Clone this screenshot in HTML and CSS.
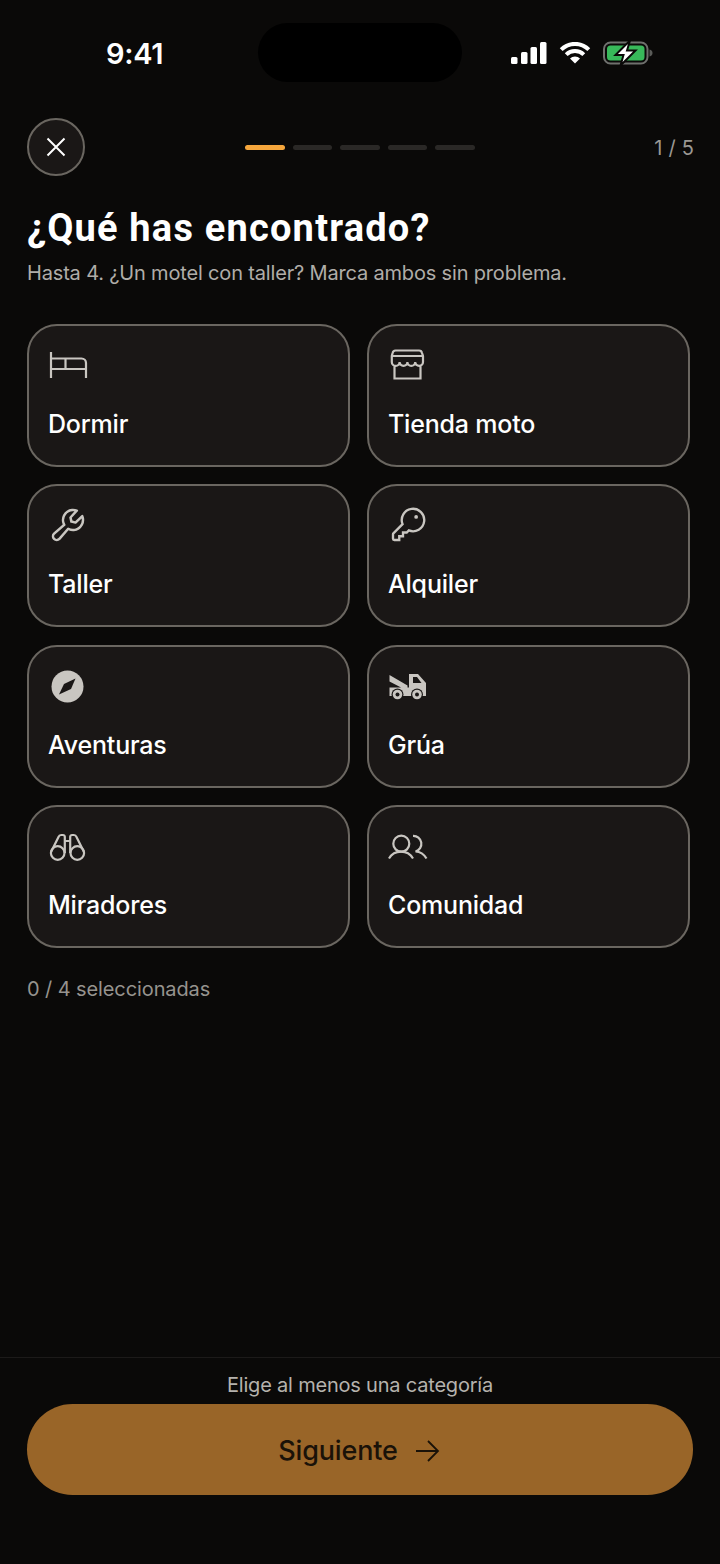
FILE: index.html
```html
<!DOCTYPE html>
<html lang="es">
<head>
    <meta charset="UTF-8">
    <meta name="viewport" content="width=device-width, initial-scale=1.0">
    <title>Nuevo lugar</title>
    <link rel="stylesheet" href="styles.css">
</head>
<body>
    <div class="page">
        <div class="status-bar">
            <div class="time">9:41</div>
            <div class="island"></div>
            <div class="status-icons">
                <svg class="signal" width="36" height="22" viewBox="0 0 36 22">
                    <rect x="0" y="15" width="6.5" height="7" rx="1.5"/>
                    <rect x="10" y="10" width="6.5" height="12" rx="1.5"/>
                    <rect x="19.5" y="5" width="6.5" height="17" rx="1.5"/>
                    <rect x="29" y="0" width="6.5" height="22" rx="1.5"/>
                </svg>
                <svg class="wifi" width="32" height="22" viewBox="0 0 32 22">
                    <path class="wifi-arc" d="M2.2 7.6A19.5 19.5 0 0 1 29.8 7.6"/>
                    <path class="wifi-arc" d="M7.2 12.6A12.5 12.5 0 0 1 24.8 12.6"/>
                    <path d="M16 21.5L11 16.5A7 7 0 0 1 21 16.5Z"/>
                </svg>
                <svg class="battery" width="50" height="26" viewBox="0 0 50 26">
                    <rect class="batt-shell" x="1" y="2.5" width="43.5" height="21" rx="6.5"/>
                    <rect class="batt-fill" x="4" y="5.5" width="37.5" height="15" rx="3.5"/>
                    <path class="batt-nub" d="M46.5 9.5c2 .3 3 1.8 3 3.5s-1 3.200-3 3.500Z"/>
                    <path class="batt-bolt" d="M27 0.500L12.500 15H20.500L17.500 25.500L32.500 10.500H24Z"/>
                </svg>
            </div>
        </div>

        <main class="content">
            <div class="top-row">
                <button class="close-btn" aria-label="Cerrar">
                    <svg width="20" height="20" viewBox="0 0 20 20"><path d="M1.500 1.500L18.500 18.500M18.500 1.500L1.500 18.500"/></svg>
                </button>
                <div class="steps">
                    <span class="step step-on"></span>
                    <span class="step"></span>
                    <span class="step"></span>
                    <span class="step"></span>
                    <span class="step"></span>
                </div>
                <div class="step-count">1 / 5</div>
            </div>

            <h1>¿Qué has encontrado?</h1>
            <p class="subtitle">Hasta 4. ¿Un motel con taller? Marca ambos sin problema.</p>

            <div class="grid">
                <div class="card">
                    <svg class="icon" viewBox="0 0 40 40">
                        <path d="M3 7V33M3 13.500H33.500a4.500 4.500 0 0 1 4.500 4.500V33M3 24H38M17.500 13.500V24"/>
                    </svg>
                    <div class="card-label">Dormir</div>
                </div>
                <div class="card">
                    <svg class="icon" viewBox="0 0 40 40">
                        <path d="M7.500 5.500H31a3 3 0 0 1 3 2.500L35 11V17a3.900 3.900 0 0 1-7.800 0a3.900 3.900 0 0 1-7.800 0a3.900 3.900 0 0 1-7.800 0a3.900 3.900 0 0 1-7.800 0V11L4.600 8a3 3 0 0 1 2.900-2.500ZM4 11H35M6.500 21V33.500H32.500V21"/>
                    </svg>
                    <div class="card-label">Tienda moto</div>
                </div>
                <div class="card">
                    <svg class="icon" viewBox="0 0 256 256">
                        <path class="solid" d="M226.760,69a8,8,0,0,0-12.840-2.880l-40.300,37.190-17.230-3.700-3.700-17.230,37.190-40.300A8,8,0,0,0,187,29.240,72,72,0,0,0,88,96,72.340,72.340,0,0,0,94,124.940L33.790,177c-.15.120-.29.260-.43.390a32,32,0,0,0,45.260,45.260c.13-.13.270-.28.390-.42L131.060,162A72,72,0,0,0,232,96,71.560,71.560,0,0,0,226.760,69ZM160,152a56.140,56.140,0,0,1-27.070-7,8,8,0,0,0-9.920,1.770L67.110,211.510a16,16,0,0,1-22.620-22.620L109.180,133a8,8,0,0,0,1.770-9.930,56,56,0,0,1,58.360-82.310l-31.200,33.810a8,8,0,0,0-1.940,7.100L141.830,108a8,8,0,0,0,6.140,6.140l26.350,5.660a8,8,0,0,0,7.100-1.940l33.810-31.200A56.060,56.060,0,0,1,160,152Z"/>
                    </svg>
                    <div class="card-label">Taller</div>
                </div>
                <div class="card">
                    <svg class="icon icon-256" viewBox="0 0 256 256">
                        <path d="M93.170,122.830a72,72,0,1,1,40,40L120,176H96v24H72v24H40a8,8,0,0,1-8-8V187.310a8,8,0,0,1,2.340-5.650Z"/>
                        <circle class="solid" cx="180" cy="76" r="12"/>
                    </svg>
                    <div class="card-label">Alquiler</div>
                </div>
                <div class="card">
                    <svg class="icon" viewBox="0 0 40 40">
                        <circle class="solid" cx="19.500" cy="20.500" r="16"/>
                        <path class="cutout" d="M27.500 12.500L23 23L11 28.500L16 18Z"/>
                    </svg>
                    <div class="card-label">Aventuras</div>
                </div>
                <div class="card">
                    <svg class="icon" viewBox="0 0 40 40">
                        <path class="solid" d="M1.500 9L19.500 19.500V22H14L1.500 15.500ZM21 8H30L38 17V30H1.500V21.500H21Z"/>
                        <path class="cutout" d="M25 11H29L33.500 17H25Z"/>
                        <circle class="cutout" cx="9.500" cy="28.500" r="6"/>
                        <circle class="cutout" cx="29" cy="28.500" r="6"/>
                        <circle class="solid" cx="9.500" cy="28.500" r="4.800"/>
                        <circle class="solid" cx="29" cy="28.500" r="4.800"/>
                        <circle class="cutout" cx="9.500" cy="28.500" r="2"/>
                        <circle class="cutout" cx="29" cy="28.500" r="2"/>
                    </svg>
                    <div class="card-label">Grúa</div>
                </div>
                <div class="card">
                    <svg class="icon" viewBox="0 0 40 40">
                        <circle cx="9.700" cy="27" r="6.800"/>
                        <circle cx="29.300" cy="27" r="6.800"/>
                        <path d="M3 26L10.500 11a3 3 0 0 1 2.700-2H15a1.800 1.800 0 0 1 1.800 1.800V27M36 26L28.500 11a3 3 0 0 0-2.700-2H24a1.800 1.800 0 0 0-1.800 1.800V27M16.800 15H22.200"/>
                    </svg>
                    <div class="card-label">Miradores</div>
                </div>
                <div class="card">
                    <svg class="icon" viewBox="0 0 40 40">
                        <circle cx="13.300" cy="17.700" r="8"/>
                        <path d="M1 32.500C3.500 28.300 8 25.700 13 25.700S22.500 28.300 25 32.500M25 9.800A8 8 0 0 1 27.500 25.500C31.500 25.700 36 28.300 38.500 32.500"/>
                    </svg>
                    <div class="card-label">Comunidad</div>
                </div>
            </div>

            <p class="counter">0 / 4 seleccionadas</p>
        </main>

        <footer class="footer">
            <p class="hint">Elige al menos una categoría</p>
            <button class="next-btn">
                <span>Siguiente</span>
                <svg width="26" height="24" viewBox="0 0 26 24"><path d="M2 12H24M14 2L24 12L14 22"/></svg>
            </button>
        </footer>
    </div>
</body>
</html>
```

FILE: styles.css
```css
body {
    margin: 0;
    background-color: #0a0908;
    font-family: Inter, "Noto Sans", sans-serif;
    color: #fff;
}
p, h1 {
    margin: 0;
}
button {
    font-family: inherit;
    cursor: pointer;
}
.page {
    height: 1564px;
    display: flex;
    flex-direction: column;
    overflow: hidden;
}

/* status bar */
.status-bar {
    height: 118px;
    flex: none;
    display: grid;
    grid-template-columns: 258px 204px 1fr;
    align-items: start;
}
.time {
    padding: 36px 0 0 106px;
    font-size: 29px;
    line-height: 36px;
    letter-spacing: -0.300px;
    font-weight: 600;
    color: #fff;
}
.island {
    margin-top: 23px;
    height: 59px;
    border-radius: 30px;
    background: #000;
}
.status-icons {
    display: flex;
    align-items: center;
    margin: 40px 0 0 49px;
}
.status-icons svg {
    flex: none;
    display: block;
}
.signal {
    fill: #fff;
}
.wifi {
    margin-left: 12px;
    fill: #fff;
}
.wifi-arc {
    fill: none;
    stroke: #fff;
    stroke-width: 4;
}
.battery {
    margin-left: 12px;
}
.batt-shell {
    fill: none;
    stroke: #6f706d;
    stroke-width: 2;
}
.batt-fill {
    fill: #38b95a;
}
.batt-nub {
    fill: #5a5b58;
}
.batt-bolt {
    fill: #fff;
    stroke: #0a0908;
    stroke-width: 2;
}

/* top row */
.content {
    flex: 1;
    padding: 0 27px;
}
.top-row {
    display: grid;
    grid-template-columns: 58px 1fr 58px;
    align-items: center;
}
.close-btn {
    width: 58px;
    height: 58px;
    padding: 0;
    border-radius: 50%;
    border: 2px solid #6a6660;
    background: #1a1716;
    display: flex;
    align-items: center;
    justify-content: center;
}
.close-btn path {
    fill: none;
    stroke: #fff;
    stroke-width: 2;
}
.steps {
    display: flex;
    justify-content: center;
    gap: 8px;
}
.step {
    width: 39.500px;
    height: 5px;
    border-radius: 3px;
    background: #2a2826;
}
.step-on {
    background: #f5a63c;
}
.step-count {
    margin-right: -2px;
    padding-top: 2px;
    text-align: right;
    font-size: 20px;
    letter-spacing: 1px;
    word-spacing: -1.500px;
    color: #9b9893;
    white-space: nowrap;
}

/* heading */
h1 {
    margin-top: 28px;
    font-family: Roboto, sans-serif;
    font-size: 38px;
    line-height: 48px;
    font-weight: 700;
    letter-spacing: 1.200px;
    color: #fff;
}
.subtitle {
    margin-top: 8px;
    font-size: 20px;
    line-height: 26px;
    letter-spacing: -0.170px;
    color: #b0ada8;
}

/* categories */
.grid {
    margin: 38px 3px 0 0;
    display: grid;
    grid-template-columns: 1fr 1fr;
    gap: 17.300px 17px;
}
.card {
    padding: 19px 19px 25px;
    border: 2px solid #6a6660;
    border-radius: 30px;
    background: #1a1716;
}
.icon {
    display: block;
    width: 40px;
    height: 40px;
    fill: none;
    stroke: #c9c6c1;
    stroke-width: 2.200;
}
.icon-256 {
    stroke-width: 15;
}
.icon .solid {
    fill: #c9c6c1;
    stroke: none;
}
.icon .cutout {
    fill: #1a1716;
    stroke: none;
}
.card-label {
    margin-top: 23px;
    font-size: 25px;
    line-height: 32px;
    font-weight: 500;
    letter-spacing: -0.200px;
    color: #fff;
}
.counter {
    margin-top: 27px;
    font-size: 20px;
    line-height: 28px;
    letter-spacing: -0.100px;
    color: #96938e;
}

/* footer */
.footer {
    flex: none;
    height: 207px;
    box-sizing: border-box;
    padding: 13px 27px 0;
    border-top: 1px solid #1c1a19;
}
.hint {
    text-align: center;
    font-size: 20px;
    line-height: 28px;
    letter-spacing: -0.200px;
    color: #b5b2ad;
}
.next-btn {
    width: 100%;
    height: 91px;
    margin-top: 5px;
    padding: 2px 2px 0 0;
    border: none;
    border-radius: 46px;
    background: #996528;
    color: #1a1208;
    font-size: 27px;
    letter-spacing: -0.150px;
    font-weight: 500;
    display: flex;
    align-items: center;
    justify-content: center;
    gap: 16px;
}
.next-btn path {
    fill: none;
    stroke: #1a1208;
    stroke-width: 1.800;
}
```
